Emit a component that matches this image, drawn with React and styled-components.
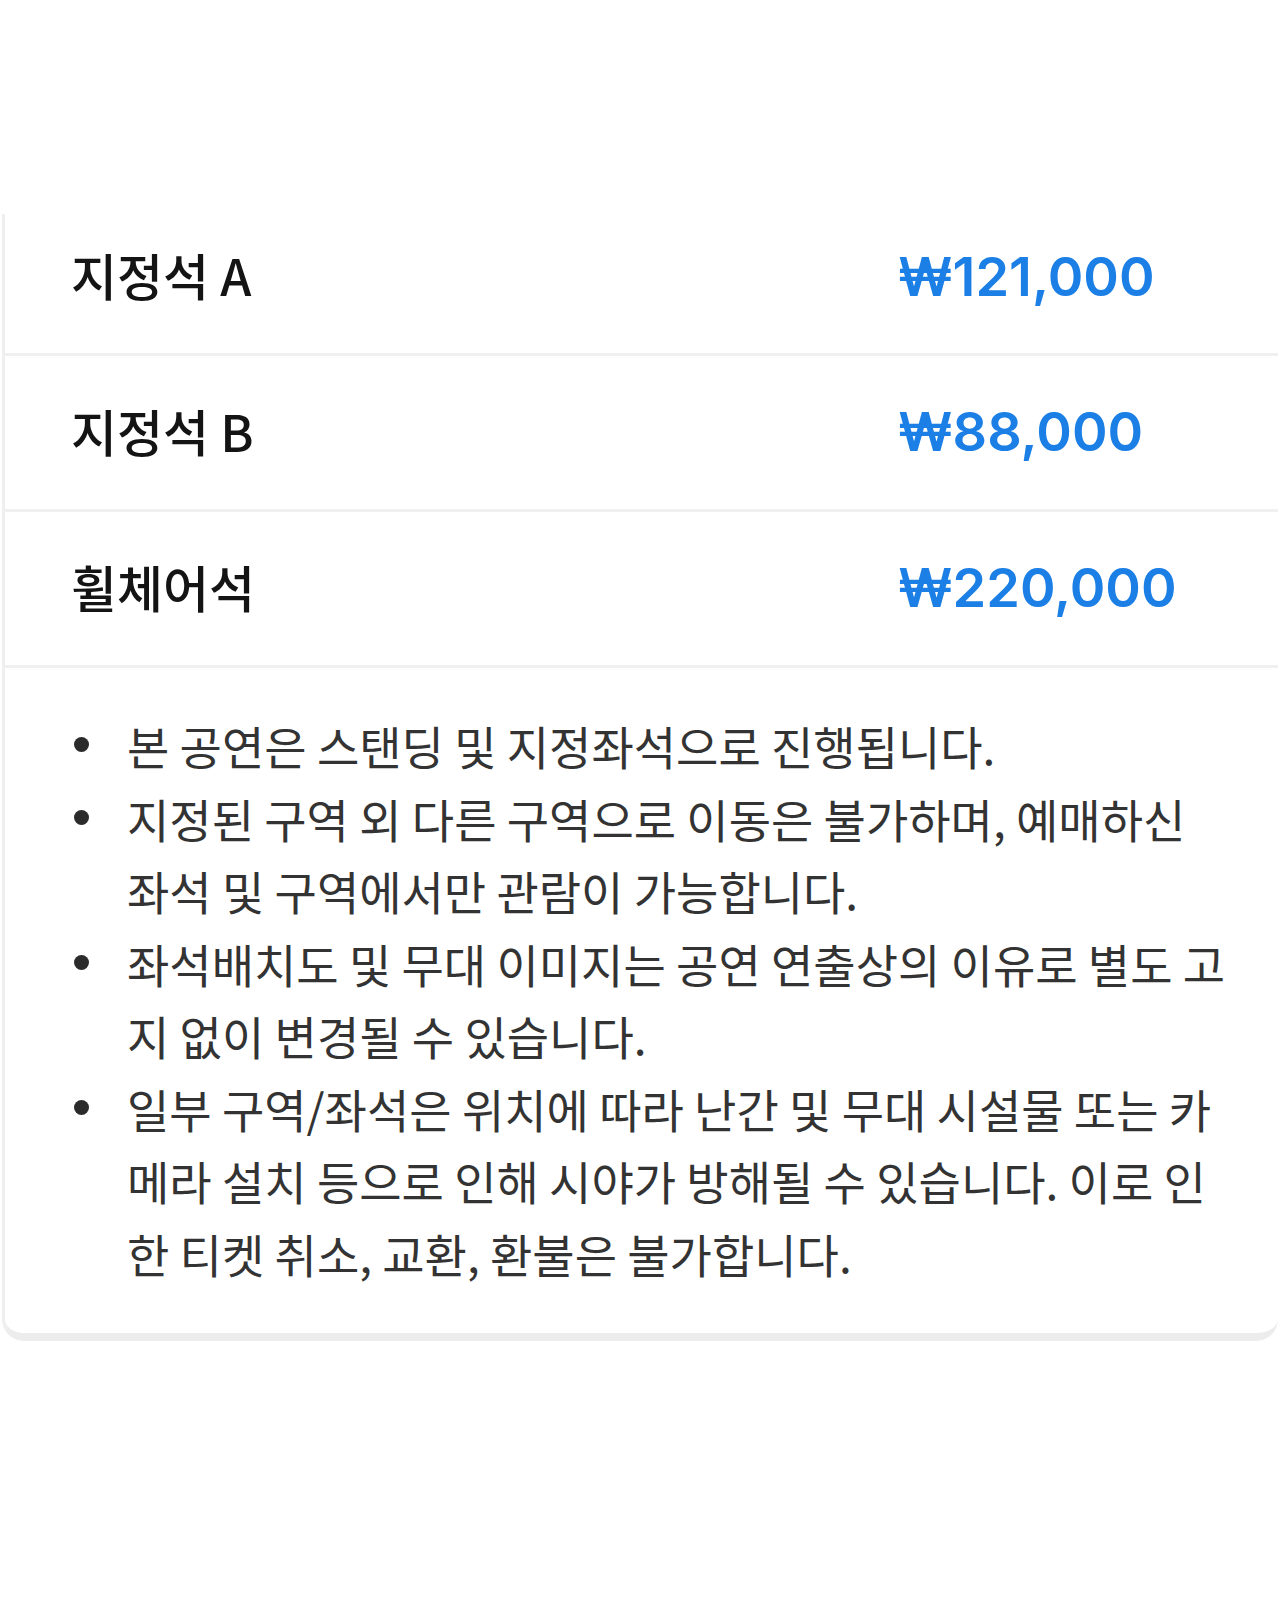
import React from "react";
import styled, { createGlobalStyle } from "styled-components";

const Global = createGlobalStyle`
  html, body {
    margin: 0;
    padding: 0;
    background: #ffffff;
    overflow: hidden;
  }
  body {
    font-family: "Noto Sans CJK KR", "Noto Sans", sans-serif;
  }
`;

const Page = styled.div`
  width: 1280px;
  min-height: 1597px;
  padding-top: 214px;
  box-sizing: border-box;
  background: #ffffff;
`;

const Card = styled.section`
  margin: 0 2px;
  background: #ffffff;
  border-left: 3px solid #efefef;
  border-bottom: 8px solid #ececec;
  border-radius: 0 0 22px 22px;
  display: flex;
  flex-direction: column;
`;

const PriceRow = styled.div`
  box-sizing: border-box;
  display: grid;
  grid-template-columns: 827px 1fr;
  align-items: center;
  padding-left: 66px;
  height: ${(p) => (p.$clipped ? "142px" : "156px")};
  padding-bottom: ${(p) => (p.$clipped ? "13px" : "0")};
  border-bottom: 3px solid #f0f0f0;
`;

const Label = styled.span`
  font-family: "Noto Sans CJK KR", "Noto Sans", sans-serif;
  font-size: 50px;
  font-weight: 500;
  line-height: 1.2;
  padding-bottom: 6px;
  color: #141414;
`;

const Price = styled.span`
  font-family: Inter, Roboto, sans-serif;
  font-size: 54px;
  font-weight: 600;
  line-height: 1.2;
  color: #1b7fe6;
`;

const Notes = styled.ul`
  list-style: none;
  margin: 0;
  padding: 41px 20px 44px 0;
  display: flex;
  flex-direction: column;
`;

const Note = styled.li`
  display: grid;
  grid-template-columns: 122px 1fr;
  font-family: "Noto Sans CJK KR", "Noto Sans", sans-serif;
  font-size: 46px;
  line-height: 72.5px;
  color: #333333;
`;

const Dot = styled.span`
  width: 15px;
  height: 15px;
  border-radius: 50%;
  background: #2b2b2b;
  margin: 28px 0 0 69px;
`;

const NoteText = styled.span`
  white-space: nowrap;
`;

const prices = [
  { label: "지정석 A", price: "₩121,000" },
  { label: "지정석 B", price: "₩88,000" },
  { label: "휠체어석", price: "₩220,000" },
];

const notes = [
  ["본 공연은 스탠딩 및 지정좌석으로 진행됩니다."],
  [
    "지정된 구역 외 다른 구역으로 이동은 불가하며, 예매하신",
    "좌석 및 구역에서만 관람이 가능합니다.",
  ],
  [
    "좌석배치도 및 무대 이미지는 공연 연출상의 이유로 별도 고",
    "지 없이 변경될 수 있습니다.",
  ],
  [
    "일부 구역/좌석은 위치에 따라 난간 및 무대 시설물 또는 카",
    "메라 설치 등으로 인해 시야가 방해될 수 있습니다. 이로 인",
    "한 티켓 취소, 교환, 환불은 불가합니다.",
  ],
];

export default function App() {
  return (
    <Page>
      <Global />
      <Card>
        {prices.map((p, i) => (
          <PriceRow key={p.label} $clipped={i === 0}>
            <Label>{p.label}</Label>
            <Price>{p.price}</Price>
          </PriceRow>
        ))}
        <Notes>
          {notes.map((lines, i) => (
            <Note key={i}>
              <Dot />
              <NoteText>
                {lines.map((l, j) => (
                  <React.Fragment key={j}>
                    {j > 0 && <br />}
                    {l}
                  </React.Fragment>
                ))}
              </NoteText>
            </Note>
          ))}
        </Notes>
      </Card>
    </Page>
  );
}
